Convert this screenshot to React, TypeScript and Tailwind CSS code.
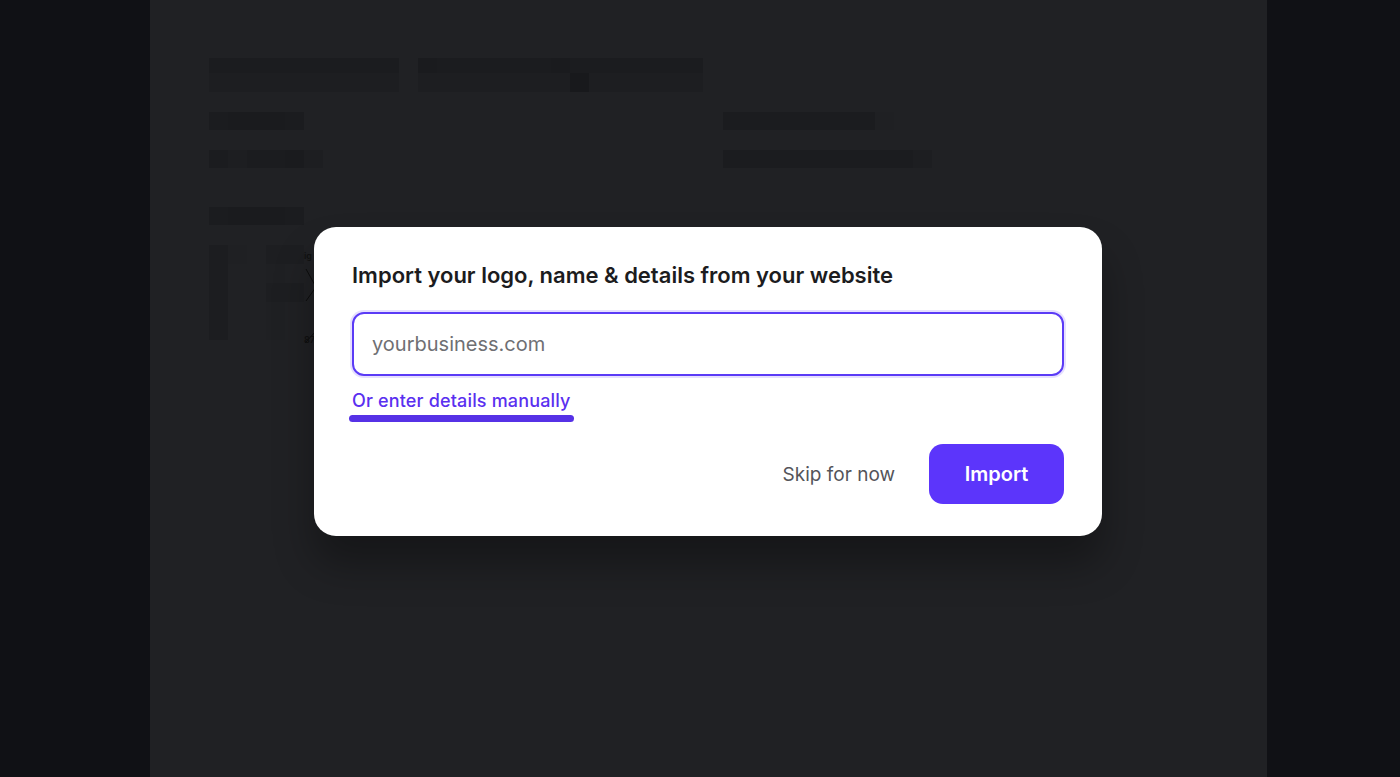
import React from "react";

const SHADE: Record<string, string> = {
  a: "bg-[#1b1c1f]",
  b: "bg-[#1d1e21]",
  c: "bg-[#18191c]",
  d: "bg-[#1f2023]",
  e: "bg-[#1a1b1e]",
};

function Cells({ pattern, h }: { pattern: string; h: string }) {
  return (
    <div className="flex">
      {pattern.split("").map((k, i) => (
        <div key={i} className={`w-[19px] ${h} ${SHADE[k]}`} />
      ))}
    </div>
  );
}

function Background() {
  return (
    <div className="flex flex-col pl-[59px] pt-[58px]">
      <div className="flex gap-[19px]">
        <div className="flex flex-col">
          <Cells pattern="aaaaaaaaaa" h="h-[15px]" />
          <Cells pattern="bbbbbbbbbb" h="h-[19px]" />
        </div>
        <div className="flex flex-col">
          <Cells pattern="eaaaaaaeaaaaaaa" h="h-[15px]" />
          <Cells pattern="bbbbbbbbcbbbbbb" h="h-[19px]" />
        </div>
      </div>
      <div className="mt-[20px] flex">
        <div className="flex w-[514px] flex-col gap-[20px]">
          <Cells pattern="aeeea" h="h-[18px]" />
          <Cells pattern="abaaeb" h="h-[18px]" />
        </div>
        <div className="flex flex-col gap-[20px]">
          <Cells pattern="aaaaaaaad" h="h-[18px]" />
          <Cells pattern="aaaaaaaaaab" h="h-[18px]" />
        </div>
      </div>
      <div className="mt-[39px] flex">
        <Cells pattern="aeeea" h="h-[18px]" />
      </div>
      <div className="mt-[20px] flex gap-0">
        <div className="h-[95px] w-[19px] bg-[#1c1d20]" />
        <div className="flex flex-col">
          <div className="h-[19px] w-[19px] bg-[#1f2023]" />
        </div>
        <div className="ml-[19px] flex flex-col">
          <div className="h-[19px] w-[38px] bg-[#1d1e21]" />
          <div className="h-[19px] w-[19px] bg-[#1f2023]" />
          <div className="h-[19px] w-[38px] bg-[#1d1e21]" />
          <div className="h-[38px] w-[19px] bg-[#1f2023]" />
        </div>
        <div className="relative w-[20px]">
          <span className="absolute left-0 top-[4px] text-[9px] font-semibold text-[#111] [font-family:Inter,sans-serif]">ig</span>
          <svg className="absolute left-0 top-[20px]" width="20" height="80" viewBox="0 0 20 80">
            <path d="M2 4 L12 22 L2 36" stroke="#0d0d0d" strokeWidth="1" fill="none" />
            <path d="M1 78 L12 66" stroke="#0d0d0d" strokeWidth="1" fill="none" />
          </svg>
          <span className="absolute left-0 top-[88px] text-[9px] font-semibold text-[#111] [font-family:Inter,sans-serif]">87</span>
        </div>
      </div>
    </div>
  );
}

export default function App() {
  return (
    <div className="flex h-[777px] w-[1400px] overflow-hidden bg-[#101115] [font-family:Inter,'Noto_Sans',sans-serif]">
      <div className="w-[150px] shrink-0" />
      <div className="relative h-full w-[1117px] shrink-0 bg-[#202124]">
        <Background />
        <div className="absolute left-[164px] top-[227px] w-[788px] rounded-[22px] bg-white px-[38px] pb-[32px] pt-[34px] shadow-[0_28px_40px_rgba(0,0,0,0.32)]">
          <h2 className="text-[22px] font-semibold leading-[28px] text-[#1c1c1e]">
            Import your logo, name &amp; details from your website
          </h2>
          <div className="mt-[23px] flex h-[64px] items-center rounded-[12px] border-2 border-[#5b3bf6] bg-white px-[18px] shadow-[0_0_0_2px_#e6e0fe]">
            <span className="text-[20px] leading-none text-[#6f6f73]">yourbusiness.com</span>
          </div>
          <div className="mt-[13px] flex">
            <div className="flex flex-col">
              <span className="text-[18px] font-medium leading-[24px] tracking-[0.16px] text-[#5a2ff0]">Or enter details manually</span>
              <div className="ml-[-3px] mr-[-3px] mt-[2px] h-[7px] rounded-full bg-[#5631e6]" />
            </div>
          </div>
          <div className="mt-[22px] flex items-center justify-end gap-[34px]">
            <span className="text-[19px] leading-none text-[#54545a]">Skip for now</span>
            <div className="flex h-[60px] w-[135px] items-center justify-center rounded-[14px] bg-[#5c35fb]">
              <span className="text-[20px] font-semibold text-white">Import</span>
            </div>
          </div>
        </div>
      </div>
      <div className="flex-1" />
    </div>
  );
}
